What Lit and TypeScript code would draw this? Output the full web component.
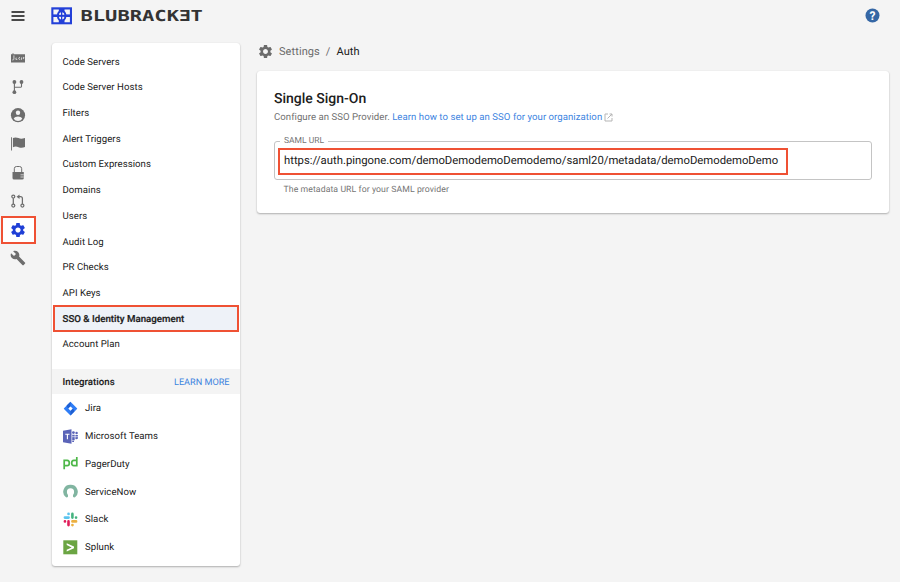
import { LitElement, html, svg, css } from "lit";
import { customElement, state } from "lit/decorators.js";
import { classMap } from "lit/directives/class-map.js";

const GEAR =
  "M19.14 12.94c.04-.3.06-.61.06-.94 0-.32-.02-.64-.07-.94l2.03-1.58c.18-.14.23-.41.12-.61l-1.92-3.32c-.12-.22-.37-.29-.59-.22l-2.39.96c-.5-.38-1.03-.7-1.62-.94l-.36-2.54c-.04-.24-.24-.41-.48-.41h-3.84c-.24 0-.43.17-.47.41l-.36 2.54c-.59.24-1.13.57-1.62.94l-2.39-.96c-.22-.08-.47 0-.59.22L2.74 8.87c-.12.21-.08.47.12.61l2.03 1.58c-.05.3-.09.63-.09.94s.02.64.07.94l-2.03 1.58c-.18.14-.23.41-.12.61l1.92 3.32c.12.22.37.29.59.22l2.39-.96c.5.38 1.03.7 1.62.94l.36 2.54c.05.24.24.41.48.41h3.84c.24 0 .44-.17.47-.41l.36-2.54c.59-.24 1.13-.56 1.62-.94l2.39.96c.22.08.47 0 .59-.22l1.92-3.32c.12-.22.07-.47-.12-.61l-2.01-1.58zM12 15.6c-1.98 0-3.6-1.62-3.6-3.6s1.62-3.6 3.6-3.6 3.6 1.62 3.6 3.6-1.62 3.6-3.6 3.6z";

const railIcons = [
  {
    name: "Code",
    art: svg`<svg viewBox="0 0 16 16"><path fill="currentColor" d="M1 4.200h1.500v-1h1v1H15v8.400H1z"/><path d="M3.900 5.400v3.800q0 .8-1.600.8M6.200 7.600l-.4 1.700 1.500.2M10 7.200q-1.400.2-1.300 1.300t1.400.9M11.400 9.800l.3-2.400M13 7.400l1.300.1M12.900 8.600h1.200" fill="none" stroke="#f4f4f4" stroke-width=".75"/></svg>`,
  },
  {
    name: "Branches",
    art: svg`<svg viewBox="0 0 16 16"><g fill="currentColor"><circle cx="4.400" cy="3" r="1.900"/><circle cx="11.500" cy="3" r="1.900"/><circle cx="4.400" cy="13.200" r="1.900"/></g><path d="M4.400 3v10M11.500 3v4.600q0 .6-.6.6H4.400" fill="none" stroke="currentColor" stroke-width="1.100"/></svg>`,
  },
  {
    name: "Account",
    art: svg`<svg viewBox="0 0 16 16"><circle cx="8" cy="8.200" r="7.100" fill="currentColor"/><circle cx="8" cy="5.700" r="2.200" fill="#f4f4f4"/><path d="M3.700 11.700c.5-1.500 2.900-2.200 4.300-2.200s3.800.7 4.300 2.200A5.200 5.200 0 0 1 8 13.900a5.200 5.200 0 0 1-4.300-2.200z" fill="#f4f4f4"/></svg>`,
  },
  {
    name: "Flags",
    art: svg`<svg viewBox="0 0 16 16"><path fill="currentColor" d="M1 1.200h.9v13.200H1zM2.900 2c1.900-.9 3.800-.7 5.600.1s3.600.8 6.500-.1v9.100c-2.600 1-4.600.8-6.400.1s-3.700-.9-5.700.1z"/></svg>`,
  },
  {
    name: "Secrets",
    art: svg`<svg viewBox="0 0 16 16"><path d="M4.300 7.500V3.700q0-2.200 2.200-2.200h3q2.200 0 2.200 2.200v3.800" fill="none" stroke="currentColor" stroke-width="1"/><path fill="currentColor" d="M2.500 6.900h11.300v6q0 1.600-1.600 1.600H4.100q-1.600 0-1.600-1.600z"/><path d="M10.500 9.800h3.300M10.500 12h3.300" stroke="#f4f4f4" stroke-width=".7"/></svg>`,
  },
  {
    name: "Pull requests",
    art: svg`<svg viewBox="0 0 16 16"><g fill="none" stroke="currentColor" stroke-width="1.250"><circle cx="3.300" cy="3.600" r="1.500"/><circle cx="3.300" cy="12.600" r="1.500"/><circle cx="12.400" cy="12.600" r="1.500"/><path d="M3.300 5.200v5.800M12.400 11V5.500q0-1.800-1.800-1.800H8"/></g><path fill="currentColor" d="M6.500 3.700 9.500 1.400v4.600z"/></svg>`,
  },
  {
    name: "Settings",
    art: svg`<svg viewBox="1.500 1 21 22"><path fill="currentColor" d=${GEAR}/></svg>`,
  },
  {
    name: "Tools",
    art: svg`<svg viewBox="0 0 24 24"><path fill="currentColor" d="m22.700 19-9.100-9.100c.9-2.300.4-5-1.500-6.900-2-2-5-2.400-7.400-1.300L9 6 6 9 1.600 4.700C.4 7.100.9 10.100 2.900 12.100c1.900 1.900 4.600 2.400 6.900 1.500l9.100 9.100c.4.4 1 .4 1.400 0l2.300-2.300c.5-.4.5-1.100.1-1.400z"/></svg>`,
  },
];

const menu = [
  "Code Servers",
  "Code Server Hosts",
  "Filters",
  "Alert Triggers",
  "Custom Expressions",
  "Domains",
  "Users",
  "Audit Log",
  "PR Checks",
  "API Keys",
  "SSO & Identity Management",
  "Account Plan",
];

const integrations = [
  {
    name: "Jira",
    art: svg`<svg viewBox="0 0 15 15"><path fill="#2f7df6" d="M7.500.7 14 7.200q.4.400 0 .8l-6.500 6.500L1 8q-.4-.4 0-.8z"/><path fill="#1f5fd0" d="M7.500.7v4.500L4.900 7.600 3.600 4.600zM7.500 14.500V10l2.600-2.400 1.300 3z"/><path fill="#fff" d="m7.500 5.400 2.200 2.200-2.200 2.200-2.200-2.200z"/></svg>`,
  },
  {
    name: "Microsoft Teams",
    art: svg`<svg viewBox="0 0 15 15"><g fill="#5b64b8"><path d="M0 1.700 8.500.2v14.600L0 13.300z"/><circle cx="10.400" cy="3.600" r="1.400"/><circle cx="13.600" cy="4" r="1.200"/><path d="M9.200 5.700h2.500v5.600H9.200zM12.400 5.900h2.500v3.500q-.6 1-2.500.7zM9.200 11.800h1.800v1.200H9.200z"/></g><path d="M2.300 5.200h4.200M4.400 5.200v5" stroke="#fff" stroke-width="1.100"/><path d="M9 7.700h6" stroke="#fff" stroke-width=".6"/></svg>`,
  },
  {
    name: "PagerDuty",
    art: svg`<svg viewBox="0 0 15 15"><g fill="none" stroke="#4db748" stroke-width="1.700"><path d="M1.200 13.300V4.300h3q2.100 0 2.100 2.700T4.200 9.700h-3M13.800 1v8.700h-3Q8.700 9.700 8.700 7t2.100-2.700h3"/></g></svg>`,
  },
  {
    name: "ServiceNow",
    art: svg`<svg viewBox="0 0 15 15"><path fill="#81b5a1" d="M7.500.8A7 7 0 0 0 2.700 13.100q.9.800 1.900.1 2.900-1.900 5.800 0 1 .7 1.900-.1A7 7 0 0 0 7.500.8zm0 3.500a3.600 3.600 0 1 1 0 7.200 3.600 3.600 0 0 1 0-7.200z"/><path fill="#fff" d="M5 10h5v2.500l1 2H4l1-2z"/></svg>`,
  },
  {
    name: "Slack",
    art: svg`<svg viewBox="0 0 15 15"><g stroke-width="2.600" stroke-linecap="round"><path stroke="#5bc4ee" d="M5.500 1.900h.1M1.900 5.600h3.700"/><path stroke="#45b37f" d="M9.400 1.900v3.700M13 5.600h.1"/><path stroke="#e01e5a" d="M1.900 9.400H2M5.500 9.400v3.700"/><path stroke="#ecb040" d="M9.400 9.400h3.700M9.400 13.100h.1"/></g></svg>`,
  },
  {
    name: "Splunk",
    art: svg`<svg viewBox="0 0 15 15"><path fill="#6ba543" d="M.3.300h14v14H.3z"/><path fill="#fff" d="M3.700 3.200 11 6.500v1.700l-7.300 3.300V9.800l5-2.400-5-2.500z"/></svg>`,
  },
];

@customElement("app-root")
class AppRoot extends LitElement {
  @state() private selected = "SSO & Identity Management";

  static styles = css`
    :host {
      display: block;
      height: 582px;
      overflow: hidden;
      background: #f4f4f4;
      color: #202020;
      font: 9.6px/14px Roboto, "Liberation Sans", sans-serif;
      letter-spacing: 0.045px;
      text-rendering: geometricPrecision;
    }
    * { box-sizing: border-box; }
    svg { display: block; width: 100%; height: 100%; }
    header {
      display: flex;
      align-items: center;
      height: 32px;
      padding: 0 20px 0 11px;
    }
    .burger { width: 14px; height: 10px; margin-top: -1px; }
    .logo { width: 152px; height: 18px; margin-left: 26px; }
    .wordmark {
      font: bold 15.2px "DejaVu Sans Mono", monospace;
      letter-spacing: 0;
    }
    .help { width: 15px; height: 15px; margin: -1px 0 0 auto; }
    .mark { font: bold 12px Roboto, sans-serif; letter-spacing: 0; }
    .body { display: flex; align-items: flex-start; }
    .rail {
      display: flex;
      flex-direction: column;
      width: 51.500px;
      padding: 12px 0 0 1px;
      color: #6d6d6d;
    }
    .slot {
      display: flex;
      align-items: center;
      justify-content: center;
      width: 34.500px;
      height: 28.600px;
      border: 2px solid transparent;
    }
    .slot.active { height: 28px; margin: 0.400px 0 0.200px; background: #fff; border-color: #ef5134; color: #1f3fd6; }
    .glyph { width: 16px; height: 16px; flex: none; }
    .card {
      background: #fff;
      border-radius: 3px;
      box-shadow: 0 1px 2px rgba(0, 0, 0, 0.28), 0 0 1px rgba(0, 0, 0, 0.1);
    }
    nav {
      width: 188.500px;
      height: 523.500px;
      margin-top: 10.500px;
      padding-top: 6px;
    }
    .item {
      display: flex;
      align-items: center;
      height: 25.730px;
      padding: 2.400px 0 0 11px;
    }
    .item.selected {
      height: 27.200px;
      margin: -0.700px 1px -0.770px;
      padding-left: 8px;
      border: 2px solid #ef5134;
      background: #eef2f8;
      font-weight: 500;
      font-size: 9.700px;
      letter-spacing: 0.010px;
      -webkit-text-stroke: 0.200px #202020;
    }
    .heading {
      display: flex;
      align-items: center;
      justify-content: space-between;
      height: 25.500px;
      margin-top: 11.700px;
      padding: 2px 10.500px 0 11px;
      background: #f4f4f4;
      font-weight: 500;
      -webkit-text-stroke: 0.100px;
    }
    .link { color: #3d84df; font-weight: 400; }
    .heading .link { font-size: 9.150px; letter-spacing: 0; -webkit-text-stroke: 0; }
    .app {
      display: flex;
      align-items: center;
      gap: 7px;
      height: 27.800px;
      padding-left: 11.500px;
    }
    .app .art { width: 15px; height: 15px; }
    .app .name { padding-top: 2px; }
    main { width: 632px; margin-left: 17px; }
    .crumbs {
      display: flex;
      align-items: center;
      height: 38.500px;
      padding: 1px 0 0 1px;
      font-size: 11px;
      letter-spacing: 0.080px;
      color: #6b6b6b;
    }
    .crumbs .art { width: 15px; height: 15px; margin: -1px 6px 0 0; }
    .crumbs .sep { margin: 0 6px; }
    .crumbs .here { color: #202020; }
    .sso { height: 142px; padding: 20px 17px 0; }
    h1 { margin: 0; font-size: 14px; line-height: 16px; font-weight: 500; letter-spacing: 0; }
    .lead { display: flex; align-items: center; margin-top: 4px; color: #707070; white-space: pre; }
    .ext { width: 9px; height: 9px; margin-left: 2px; color: #b5b5b5; }
    fieldset {
      min-width: 0;
      height: 44px;
      margin: 11.500px 0 0;
      padding: 0 0 0 3px;
      border: 1px solid #c4c4c4;
      border-radius: 3px;
    }
    legend { margin-left: 2px; padding: 1px 4px 0; font-size: 8.500px; line-height: 9px; letter-spacing: 0; color: #757575; }
    .url {
      display: flex;
      align-items: center;
      width: 510px;
      height: 27px;
      margin-top: 1.500px;
      padding: 0 0 0 4px;
      border: 2px solid #ef5134;
      font-size: 11.300px;
      letter-spacing: 0;
      white-space: nowrap;
    }
    .hint { margin: 2.500px 0 0 9.500px; font-size: 8.700px; letter-spacing: 0.080px; color: #757575; }
  `;

  render() {
    return html`
      <header>
        <div class="burger"><svg viewBox="0 0 14 10"><path d="M.5 1h13M.5 5h13M.5 9h13" stroke="#111" stroke-width="1.400"/></svg></div>
        <div class="logo">
          <svg viewBox="0 0 152 18">
            <rect x=".3" y=".3" width="20.700" height="17" fill="#2340d8"/>
            <path fill="#f4f4f4" d="M2.400 2.400h5.400v5.200H2.400zM13.500 2.400h5.400v5.200h-5.400zM2.400 10h5.400v5.200H2.400zM13.500 10h5.400v5.200h-5.400z"/>
            <rect x="7" y="4.200" width="7.300" height="9.200" rx="3.600" fill="#f4f4f4" stroke="#2340d8" stroke-width="2"/>
            <path d="M2 8.800h17.300" stroke="#2340d8" stroke-width="2"/>
            <path d="M10.650 5v8" stroke="#2340d8" stroke-width="1.300"/>
            <g class="wordmark" fill="#333">
              <text x="29.500" y="14" textLength="98.500" lengthAdjust="spacingAndGlyphs">BLUBRACK</text>
              <text transform="translate(140 14) scale(-1 1)" textLength="12" lengthAdjust="spacingAndGlyphs">E</text>
              <text x="139.500" y="14" textLength="12.300" lengthAdjust="spacingAndGlyphs">T</text>
            </g>
          </svg>
        </div>
        <div class="help"><svg viewBox="0 0 15 15"><circle cx="7.500" cy="7.500" r="7" fill="#3567a5"/><text class="mark" x="7.500" y="11.800" text-anchor="middle" fill="#fff">?</text></svg></div>
      </header>
      <div class="body">
        <div class="rail">
          ${railIcons.map(
            (i) => html`<div class=${classMap({ slot: true, active: i.name === "Settings" })} title=${i.name}><div class="glyph">${i.art}</div></div>`
          )}
        </div>
        <nav class="card">
          ${menu.map(
            (m) => html`<div class=${classMap({ item: true, selected: m === this.selected })} @click=${() => (this.selected = m)}>${m}</div>`
          )}
          <div class="heading"><span>Integrations</span><span class="link">LEARN MORE</span></div>
          ${integrations.map((i) => html`<div class="app"><div class="art">${i.art}</div><span class="name">${i.name}</span></div>`)}
        </nav>
        <main>
          <div class="crumbs">
            <div class="art"><svg viewBox="1.500 1 21 22"><path fill="currentColor" d=${GEAR} /></svg></div>
            <span>Settings</span><span class="sep">/</span><span class="here">Auth</span>
          </div>
          <section class="card sso">
            <h1>Single Sign-On</h1>
            <div class="lead"><span>Configure an SSO Provider. </span><span class="link">Learn how to set up an SSO for your organization</span><div class="ext"><svg viewBox="0 0 9 9"><path d="M4 1H1v7h7V5M5.500 1H8v2.500M8 1 3.500 5.500" fill="none" stroke="currentColor"/></svg></div></div>
            <fieldset>
              <legend>SAML URL</legend>
              <div class="url">https://auth.pingone.com/demoDemodemoDemodemo/saml20/metadata/demoDemodemoDemo</div>
            </fieldset>
            <div class="hint">The metadata URL for your SAML provider</div>
          </section>
        </main>
      </div>
    `;
  }
}
